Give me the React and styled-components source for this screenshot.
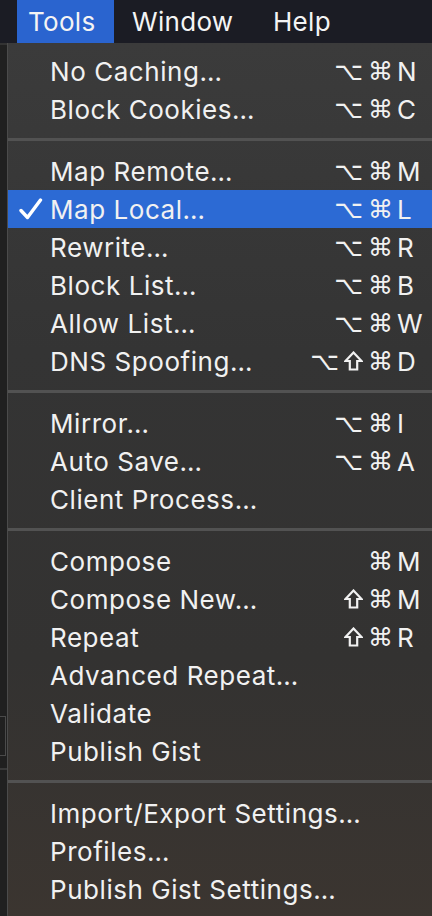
import React from 'react';
import styled, { createGlobalStyle } from 'styled-components';

const GlobalStyle = createGlobalStyle`
  html, body {
    margin: 0;
    padding: 0;
    background: #1f1f1f;
  }
  body {
    font-family: Inter, "Noto Sans", "DejaVu Sans", sans-serif;
    -webkit-font-smoothing: antialiased;
  }
`;

const Screen = styled.div`
  width: 432px;
  height: 916px;
  overflow: hidden;
  display: flex;
  flex-direction: column;
  background: #1f1f1f;
`;

const MenuBar = styled.div`
  height: 43px;
  flex: none;
  display: flex;
  align-items: stretch;
  padding-left: 17px;
  background: #1b1c24;
`;

const BarItem = styled.div`
  display: flex;
  align-items: center;
  width: ${(p) => p.w}px;
  padding-left: ${(p) => p.pad || 11}px;
  box-sizing: border-box;
  font-size: 26px;
  letter-spacing: 0.3px;
  color: #f4f4f4;
  background: ${(p) => (p.active ? '#2a64cf' : 'transparent')};
`;

const Body = styled.div`
  flex: 1;
  display: flex;
  min-height: 0;
`;

const Gutter = styled.div`
  width: 7px;
  flex: none;
  display: flex;
  flex-direction: column;
  background: #202020;
  border-top: 2px solid #333333;
`;

const GutterBracket = styled.div`
  margin-top: 671px;
  height: 38px;
  width: 5px;
  border: 1px solid #4a4a4a;
  border-left: none;
`;

const GutterLine = styled.div`
  margin-top: 12px;
  height: 2px;
  background: #3a3a3a;
`;

const Menu = styled.div`
  flex: 1;
  height: 870px;
  padding-top: 9px;
  border-left: 1px solid #4b4b4b;
  border-bottom: 1px solid #4b4b4b;
  border-bottom-left-radius: 9px;
  background: linear-gradient(
    180deg,
    #3b3b3b 0%,
    #343434 35%,
    #333231 70%,
    #3b3530 100%
  );
`;

const Row = styled.div`
  height: 38px;
  display: grid;
  grid-template-columns: 42px 1fr auto;
  align-items: center;
  color: #f1f1f1;
  background: ${(p) => (p.selected ? '#2c6ad4' : 'transparent')};
`;

const CheckCell = styled.span`
  display: flex;
  align-items: center;
  padding-left: 11px;
`;

const Label = styled.span`
  font-size: 26px;
  letter-spacing: 0.55px;
  white-space: nowrap;
`;

const Shortcut = styled.span`
  display: flex;
  align-items: center;
`;

const Mods = styled.span`
  display: flex;
  align-items: center;
  gap: 5px;
  font-family: "DejaVu Sans", sans-serif;
  font-size: 25px;
  margin-right: 4px;
`;

const Key = styled.span`
  width: 27px;
  padding-right: 8px;
  font-size: 26px;
`;

const Separator = styled.div`
  height: 3px;
  margin: 10px 0 11px;
  background: #525252;
`;

const CheckIcon = () => (
  <svg width="24" height="22" viewBox="0 0 24 22">
    <path
      d="M2 12.5 L8.5 19.5 L21.5 2"
      fill="none"
      stroke="#fff"
      strokeWidth="3.4"
      strokeLinecap="round"
      strokeLinejoin="round"
    />
  </svg>
);

const ShiftIcon = () => (
  <svg width="19" height="20" viewBox="0 0 19 20">
    <path
      d="M9.5 1.5 L17.5 10 L13.2 10 L13.2 18.5 L5.8 18.5 L5.8 10 L1.5 10 Z"
      fill="none"
      stroke="#f1f1f1"
      strokeWidth="2.2"
      strokeLinejoin="miter"
    />
  </svg>
);

const modGlyph = (m, i) =>
  m === '⇧' ? <ShiftIcon key={i} /> : <span key={i}>{m}</span>;

const groups = [
  [
    ['No Caching…', '⌥⌘', 'N'],
    ['Block Cookies…', '⌥⌘', 'C'],
  ],
  [
    ['Map Remote…', '⌥⌘', 'M'],
    ['Map Local…', '⌥⌘', 'L', true],
    ['Rewrite…', '⌥⌘', 'R'],
    ['Block List…', '⌥⌘', 'B'],
    ['Allow List…', '⌥⌘', 'W'],
    ['DNS Spoofing…', '⌥⇧⌘', 'D'],
  ],
  [
    ['Mirror…', '⌥⌘', 'I'],
    ['Auto Save…', '⌥⌘', 'A'],
    ['Client Process…'],
  ],
  [
    ['Compose', '⌘', 'M'],
    ['Compose New…', '⇧⌘', 'M'],
    ['Repeat', '⇧⌘', 'R'],
    ['Advanced Repeat…'],
    ['Validate'],
    ['Publish Gist'],
  ],
  [
    ['Import/Export Settings…'],
    ['Profiles…'],
    ['Publish Gist Settings…'],
  ],
];

function App() {
  return (
    <Screen>
      <GlobalStyle />
      <MenuBar>
        <BarItem active w={97}>Tools</BarItem>
        <BarItem w={148} pad={18}>Window</BarItem>
        <BarItem w={100}>Help</BarItem>
      </MenuBar>
      <Body>
        <Gutter>
          <GutterBracket />
          <GutterLine />
        </Gutter>
        <Menu>
          {groups.map((group, gi) => (
            <React.Fragment key={gi}>
              {gi > 0 && <Separator />}
              {group.map(([label, mods, key, selected]) => (
                <Row key={label} selected={selected}>
                  <CheckCell>{selected && <CheckIcon />}</CheckCell>
                  <Label>{label}</Label>
                  {key ? (
                    <Shortcut>
                      <Mods>{[...mods].map(modGlyph)}</Mods>
                      <Key>{key}</Key>
                    </Shortcut>
                  ) : (
                    <span />
                  )}
                </Row>
              ))}
            </React.Fragment>
          ))}
        </Menu>
      </Body>
    </Screen>
  );
}

export default App;
